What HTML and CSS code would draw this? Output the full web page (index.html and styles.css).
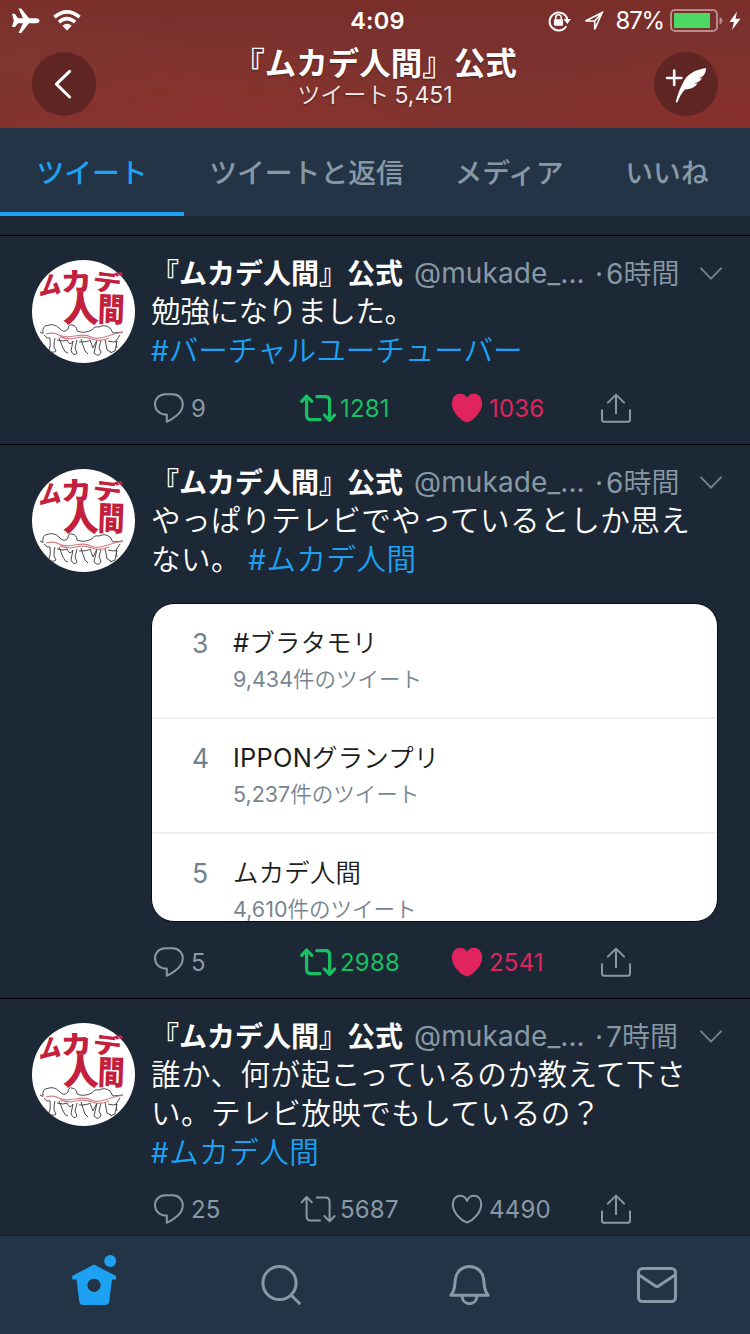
FILE: index.html
```html
<!DOCTYPE html>
<html lang="ja">
<head>
<meta charset="utf-8">
<title>『ムカデ人間』公式</title>
<link rel="stylesheet" href="styles.css">
</head>
<body>
<svg class="defs" width="0" height="0">
  <symbol id="reply" viewBox="0 0 32 32"><path d="M13.8 22.6C6.2 22.6 2 17.6 2 12.3C2 6.4 6.6 2.3 12.2 2.3H19.6C25.6 2.3 29.8 6.8 29.8 12.2C29.8 17.6 27 20.8 23.4 23.8C20.4 26.3 17.2 28.4 13.8 29.8Z"/></symbol>
  <symbol id="retweet" viewBox="0 0 36 32"><path d="M1.700 9.400L6.600 4L11.800 9.400M6.600 4.600V23.200Q6.600 27.600 11 27.600H20M16.800 4.600H25.400Q29.600 4.600 29.600 8.800V27.800M24.400 23L29.600 28.400L34.600 23"/></symbol>
  <symbol id="heart" viewBox="0 0 32 32"><path d="M16 29.6C9 26.8 1.8 19 1.8 11.2C1.8 5.7 5.2 2.8 9.2 2.8C12.4 2.8 14.8 4.8 16 7.8C17.2 4.8 19.6 2.8 22.8 2.8C26.8 2.8 30.2 5.7 30.2 11.2C30.2 19 23 26.8 16 29.6Z"/></symbol>
  <symbol id="share" viewBox="0 0 32 32"><path d="M7.9 10.6L16 2.6L24.1 10.6M16 3V21.2M2 18.2V27.4Q2 29.8 4.4 29.8H27.6Q30 29.8 30 27.4V18.2"/></symbol>
  <symbol id="chevron" viewBox="0 0 24 16"><path d="M2 2.4L12 12.6L22 2.4"/></symbol>
  <symbol id="avatar" viewBox="0 0 104 104">
    <circle cx="51.500" cy="51.500" r="51.500" fill="#fff"/>
    <g class="avatar-title">
      <text transform="translate(6.500 36) rotate(-8) skewX(-14) scale(.920 1)" font-size="25">ム</text>
      <text transform="translate(29 31.500) rotate(-2) scale(1.160 .960)" font-size="27">カ</text>
      <text transform="translate(60 29) rotate(7) scale(1.120 .900)" font-size="26">デ</text>
      <text transform="translate(31 62) scale(1.060 1.060)" font-size="34">人</text>
      <text transform="translate(65.500 61) rotate(2) scale(.92 1.140)" font-size="29">間</text>
    </g>
    <g fill="none" stroke="#4d4a4c" stroke-width="1">
      <path d="M8 72L11 73.500Q10 66 15 65.500Q22 63 27 68Q32 74 36 69Q36 64 40 65Q45 66 45 71Q52 74 60 70Q62 66 67 67Q73 64 78 68L81 73L91 72"/>
      <path d="M12 75Q15 79 18 78Q19 86 17 90Q20 94 24 91L22 87Q22 80 23 78M27 78L31 88Q33 93 36 93M25 80Q32 82 35 80Q38 87 41 81L39 91Q42 97 45 93L43 88L45 80M49 79Q51 86 53 91L56 94M47 82Q56 82 58 80L61 88L65 80L62 93Q67 98 69 92L67 88L69 80M73 79L75 90L79 92M76 81Q82 83 85 81L83 91L78 93M88 75L84 81L85 88"/>
    </g>
    <path d="M14 74Q22 72 27 75T43 76T59 77T76 76T90 73M28 77Q36 80 44 78T60 79T77 78" fill="none" stroke="#ce8288" stroke-width="1.200"/>
  </symbol>
</svg>

<div class="screen">
  <header class="header">
    <div class="status">
      <div class="status-left">
        <svg width="28" height="26" viewBox="0 0 28 26"><path fill="#fff" d="M0 5.500L3 6L6 10.200H11L6.500 0.500H9.200L17 10.200H24Q27.500 10.600 27.500 12.700Q27.500 14.800 24 15.200H17L9.200 25H6.500L11 15.200H6L3 19H0L1.800 12.700Z"/></svg>
        <svg width="28" height="21" viewBox="0 0 28 21"><g fill="none" stroke="#fff" stroke-width="3.600"><path d="M1.400 7.200Q14-3.600 26.600 7.200"/><path d="M5.900 12.200Q14 5.200 22.100 12.200"/></g><path fill="#fff" d="M9.300 15.700Q14 11.800 18.700 15.700L14 20.400Z"/></svg>
      </div>
      <div class="clock">4:09</div>
      <div class="status-right">
        <svg width="24" height="22" viewBox="0 0 24 22"><path d="M18.300 16.300A9 9 0 1 1 19.300 9" fill="none" stroke="#fff" stroke-width="2"/><path d="M15.500 9H23L19.300 14Z" fill="#fff"/><rect x="6" y="9.200" width="9" height="6.500" rx="1" fill="#fff"/><path d="M7.700 9.500V7.500a2.800 2.800 0 0 1 5.600 0V9.500" fill="none" stroke="#fff" stroke-width="1.600"/></svg>
        <svg class="location" width="20" height="20" viewBox="0 0 20 20"><path d="M1.500 10L18.200 1.500L10.700 18.300V10Z M10.700 10L18 1.800" fill="none" stroke="#fff" stroke-width="1.600"/></svg>
        <span class="percent">87%</span>
        <svg width="53" height="24" viewBox="0 0 53 24"><rect x="1" y="1" width="46" height="21" rx="4" fill="none" stroke="#fff" stroke-opacity=".45" stroke-width="2"/><rect x="4" y="4" width="36" height="15" fill="#4cd964"/><path d="M49.500 8.200Q52.500 9 52.500 11.700T49.500 15.200Z" fill="#fff" fill-opacity=".45"/></svg>
        <svg class="bolt" width="12" height="20" viewBox="0 0 12 20"><path d="M8 .5L.5 11H5L3 19L11.500 7.800H6.500Z" fill="#fff"/></svg>
      </div>
    </div>
    <div class="title-row">
      <div class="round"><svg width="64" height="64" viewBox="0 0 64 64"><path d="M37.600 19.400L24.400 32.200L37.600 45" fill="none" stroke="#fff" stroke-width="3" stroke-linecap="round" stroke-linejoin="round"/></svg></div>
      <div class="titles"><h1 class="title">『ムカデ人間』公式</h1><p class="subtitle">ツイート <span class="latin">5,451</span></p></div>
      <div class="round"><svg width="64" height="64" viewBox="0 0 64 64"><path d="M13 26H27.300M20.200 18.600V33" stroke="#fff" stroke-width="2.600" stroke-linecap="round"/><path fill="#fff" d="M52 16C42 17.500 34 22 30.500 28C27 34 24 41 21.800 49.500Q22.300 51.500 23.800 49.500Q26.500 42 31 37.500C38 37 41.500 34.500 43.500 31.500L39.500 31.600C44 30.500 46.500 29 48 26.200L45 26.300C49.500 24.500 52 21.500 52 16Z"/></svg></div>
    </div>
  </header>

  <nav class="tabs">
    <div class="tab tab-active">ツイート</div><div class="tab">ツイートと返信</div><div class="tab">メディア</div><div class="tab">いいね</div>
  </nav>

  <main class="feed">
    <article class="tweet">
      <svg class="avatar"><use href="#avatar"/></svg>
      <div class="content">
        <div class="byline"><b class="name">『ムカデ人間』公式</b><span class="handle">@mukade_...</span><span class="dot">·</span><span class="time"><span class="latin">6</span>時間</span><svg class="chevron"><use href="#chevron"/></svg></div>
        <p class="text"><span class="tighter">勉強になりました。</span><br><span class="tag"><span class="hash">#</span><span class="tight">バーチャルユーチューバー</span></span></p>
        <div class="actions">
          <div class="action"><svg class="icon"><use href="#reply"/></svg><span class="count">9</span></div>
          <div class="action retweeted"><svg class="icon icon-wide"><use href="#retweet"/></svg><span class="count">1281</span></div>
          <div class="action liked"><svg class="icon"><use href="#heart"/></svg><span class="count">1036</span></div>
          <div class="action"><svg class="icon"><use href="#share"/></svg></div>
        </div>
      </div>
    </article>

    <article class="tweet">
      <svg class="avatar"><use href="#avatar"/></svg>
      <div class="content">
        <div class="byline"><b class="name">『ムカデ人間』公式</b><span class="handle">@mukade_...</span><span class="dot">·</span><span class="time"><span class="latin">6</span>時間</span><svg class="chevron"><use href="#chevron"/></svg></div>
        <p class="text"><span class="loose">やっぱりテレビでやっているとしか思え</span><br><span class="loose">ない。 <span class="tag"><span class="hash">#</span>ムカデ人間</span></span></p>
        <div class="card">
          <div class="trend"><span class="rank">3</span><div><div class="topic"><span class="latin">#</span>ブラタモリ</div><div class="volume"><span class="latin">9,434</span>件のツイート</div></div></div>
          <div class="trend"><span class="rank">4</span><div><div class="topic"><span class="latin">IPPON</span>グランプリ</div><div class="volume"><span class="latin">5,237</span>件のツイート</div></div></div>
          <div class="trend"><span class="rank">5</span><div><div class="topic">ムカデ人間</div><div class="volume"><span class="latin">4,610</span>件のツイート</div></div></div>
        </div>
        <div class="actions">
          <div class="action"><svg class="icon"><use href="#reply"/></svg><span class="count">5</span></div>
          <div class="action retweeted"><svg class="icon icon-wide"><use href="#retweet"/></svg><span class="count">2988</span></div>
          <div class="action liked"><svg class="icon"><use href="#heart"/></svg><span class="count">2541</span></div>
          <div class="action"><svg class="icon"><use href="#share"/></svg></div>
        </div>
      </div>
    </article>

    <article class="tweet">
      <svg class="avatar"><use href="#avatar"/></svg>
      <div class="content">
        <div class="byline"><b class="name">『ムカデ人間』公式</b><span class="handle">@mukade_...</span><span class="dot">·</span><span class="time"><span class="latin">7</span>時間</span><svg class="chevron"><use href="#chevron"/></svg></div>
        <p class="text"><span class="loose">誰か、何が起こっているのか教えて下さ</span><br><span class="loose">い。テレビ放映でもしているの？</span><br><span class="tag loose"><span class="hash">#</span>ムカデ人間</span></p>
        <div class="actions actions-high">
          <div class="action"><svg class="icon"><use href="#reply"/></svg><span class="count">25</span></div>
          <div class="action"><svg class="icon icon-wide"><use href="#retweet"/></svg><span class="count">5687</span></div>
          <div class="action"><svg class="icon"><use href="#heart"/></svg><span class="count">4490</span></div>
          <div class="action"><svg class="icon"><use href="#share"/></svg></div>
        </div>
      </div>
    </article>
  </main>

  <nav class="bottom">
    <svg class="nav-icon" viewBox="0 0 56 56"><g fill="#1da1f2"><path fill-rule="evenodd" d="M28 7.500L49.500 18.800Q50.500 19.500 50 22.500H46L43.200 44.500Q42.700 48 39.200 48H17.200Q13.700 48 13.300 44.500L10.500 22.500H6.500Q5.700 19.500 6.500 18.800ZM28 21.700a6.600 6.600 0 1 0 .01 0Z"/><circle cx="44.200" cy="4" r="6"/></g></svg>
    <svg class="nav-icon" viewBox="0 0 56 56"><g class="nav-line"><circle cx="26.500" cy="26" r="16.600"/><path d="M38.500 38.500L46.300 46.300"/></g></svg>
    <svg class="nav-icon" viewBox="0 0 56 56"><g class="nav-line"><path d="M9.800 38.300H47.200C42.500 33 43.600 29 42.600 22C41.400 14 35.600 9.500 28.500 9.500S15.600 14 14.400 22C13.400 29 14.500 33 9.800 38.300ZM21 38.800C21.500 49.300 35.500 49.300 36 38.800"/></g></svg>
    <svg class="nav-icon" viewBox="0 0 56 56"><g class="nav-line"><rect x="10.500" y="11.500" width="37" height="33" rx="4"/><path d="M11 18L26.700 28.500Q29 30.500 31.300 28.500L47 18"/></g></svg>
  </nav>
</div>
</body>
</html>
```

FILE: styles.css
```css
* { box-sizing: border-box; }
body {
  margin: 0;
  background: #1c2835;
  color: #fff;
  font-family: "Noto Sans CJK JP", sans-serif;
  text-spacing-trim: space-all;
}
h1, p { margin: 0; }
svg { display: block; flex: none; overflow: visible; }
.defs { position: absolute; }
.latin { font-family: "Inter", sans-serif; font-weight: 400; line-height: 1; }

.screen {
  width: 750px;
  height: 1334px;
  overflow: hidden;
  display: flex;
  flex-direction: column;
}

/* profile banner */
.header {
  flex: none;
  height: 128px;
  background:
    radial-gradient(ellipse 240px 90px at 210px 118px, #8a322d 0%, rgba(138, 50, 45, 0) 100%),
    radial-gradient(ellipse 220px 90px at 740px 125px, #87302c 0%, rgba(135, 48, 44, 0) 100%),
    radial-gradient(ellipse 200px 60px at 30px 60px, #7f3630 0%, rgba(127, 54, 48, 0) 100%),
    linear-gradient(#792e2a, #7b322e 45%, #82332f);
}
.status {
  height: 40px;
  display: grid;
  grid-template-columns: 1fr auto 1fr;
  align-items: center;
  padding: 0 9px 0 12px;
}
.status-left { display: flex; align-items: center; gap: 13px; }
.clock {
  font: 600 23.5px/40px "Inter", sans-serif;
  letter-spacing: .2px;
  padding-left: 2px;
}
.status-right { display: flex; align-items: center; justify-content: flex-end; }
.location { margin-left: 12px; }
.percent {
  font: 400 24px/40px "Inter", sans-serif;
  letter-spacing: -1.2px;
  margin: 1px 6px 0 12px;
}
.bolt { margin-left: 6px; }
.title-row {
  display: flex;
  justify-content: space-between;
  padding: 0 32px;
}
.round {
  width: 64px;
  height: 64px;
  margin-top: 12px;
  border-radius: 50%;
  background: #5f2624;
}
.titles { text-align: center; padding-top: 4px; text-shadow: 0 1px 2px rgba(0, 0, 0, .4); }
.title { font-size: 31.5px; line-height: 35px; font-weight: 700; }
.subtitle { font-size: 23px; line-height: 28px; font-weight: 350; opacity: .9; }

/* profile tabs */
.tabs {
  flex: none;
  height: 89px;
  display: grid;
  grid-template-columns: 184px 245px 160px 156px;
  background: #243447;
  border-bottom: 1px solid #1a2632;
  color: #8899a6;
}
.tab {
  height: 88px;
  font-size: 27.8px;
  font-weight: 500;
  line-height: 86px;
  text-align: center;
}
.tab-active { color: #1da1f2; border-bottom: 4px solid #1da1f2; }

/* timeline */
.feed { flex: 1; min-height: 0; overflow: hidden; padding-top: 18px; }
.tweet {
  display: flex;
  gap: 16px;
  padding: 17px 32px 20px;
  border-top: 1px solid #000;
}
.avatar { width: 104px; height: 104px; margin-top: 7px; }
.avatar-title { fill: #c2203c; font-weight: 900; }
.content { width: 566px; }
.byline {
  display: flex;
  align-items: center;
  height: 39px;
  color: #8899a6;
  white-space: nowrap;
}
.byline > * { flex: none; }
.name { font-size: 28px; line-height: 37px; color: #fff; margin: -1px 0 0 -1px; }
.handle {
  font: 400 28px/37px "Inter", sans-serif;
  letter-spacing: .1px;
  width: 181px;
  margin: 1px 0 0 11px;
}
.dot { width: 11px; margin-top: 4px; font: 400 28px/37px "Inter", sans-serif; }
.time { width: 93px; font-size: 28px; font-weight: 350; line-height: 37px; }
.chevron {
  width: 24px;
  height: 16px;
  margin-top: 3px;
  fill: none;
  stroke: #71838f;
  stroke-width: 2;
  stroke-linecap: round;
}
.text {
  position: relative;
  top: -2px;
  margin-left: -1px;
  font-size: 29.6px;
  line-height: 39px;
  font-weight: 350;
  white-space: nowrap;
}
.tight { letter-spacing: -.05px; }
.tighter { letter-spacing: -.4px; }
.loose { letter-spacing: .45px; }
.tag { color: #1da1f2; }
.hash { font: 400 28px/1 "Inter", sans-serif; }
.actions {
  display: grid;
  grid-template-columns: 147px 151px 149px 1fr;
  margin: 22px 0 0 1px;
  color: #8899a6;
}
.actions-high { margin-top: 21px; }
.action { display: flex; align-items: center; height: 32px; gap: 6px; }
.retweeted { color: #19bf63; }
.liked { color: #e0245e; }
.icon {
  width: 32px;
  height: 32px;
  fill: none;
  stroke: currentColor;
  stroke-width: 2;
  stroke-linecap: round;
  stroke-linejoin: round;
}
.icon-wide { width: 36px; margin-right: -2px; }
.retweeted .icon { stroke-width: 3.2; }
.liked .icon { fill: currentColor; }
.count { font: 400 24px/32px "Inter", sans-serif; letter-spacing: .2px; padding-top: 1px; }

/* attached picture of the trend list */
.card {
  width: 567px;
  height: 319px;
  margin: 24px 0 0 -1px;
  overflow: hidden;
  border: 1px solid #05080c;
  border-radius: 23px;
  background: #fff;
}
.card + .actions { margin-top: 24px; }
.trend {
  display: flex;
  height: 115px;
  padding: 17px 0 0 40px;
  border-bottom: 2px solid #edf0f1;
}
.rank {
  font: 400 26.5px/40px "Inter", sans-serif;
  width: 41px;
  padding-top: 2px;
  color: #71808c;
}
.topic { height: 41px; font-size: 25.4px; line-height: 40px; font-weight: 350; letter-spacing: .25px; color: #1c1c1c; }
.volume { height: 32px; font-size: 21.5px; line-height: 32px; color: #778592; font-weight: 350; }

/* app navigation */
.bottom {
  flex: none;
  height: 99px;
  display: grid;
  grid-template-columns: repeat(4, 1fr);
  align-items: center;
  justify-items: center;
  background: #243447;
  border-top: 1px solid #17222e;
}
.nav-icon { width: 56px; height: 56px; }
.nav-line {
  fill: none;
  stroke: #8899a6;
  stroke-width: 3;
  stroke-linecap: round;
  stroke-linejoin: round;
}
```
